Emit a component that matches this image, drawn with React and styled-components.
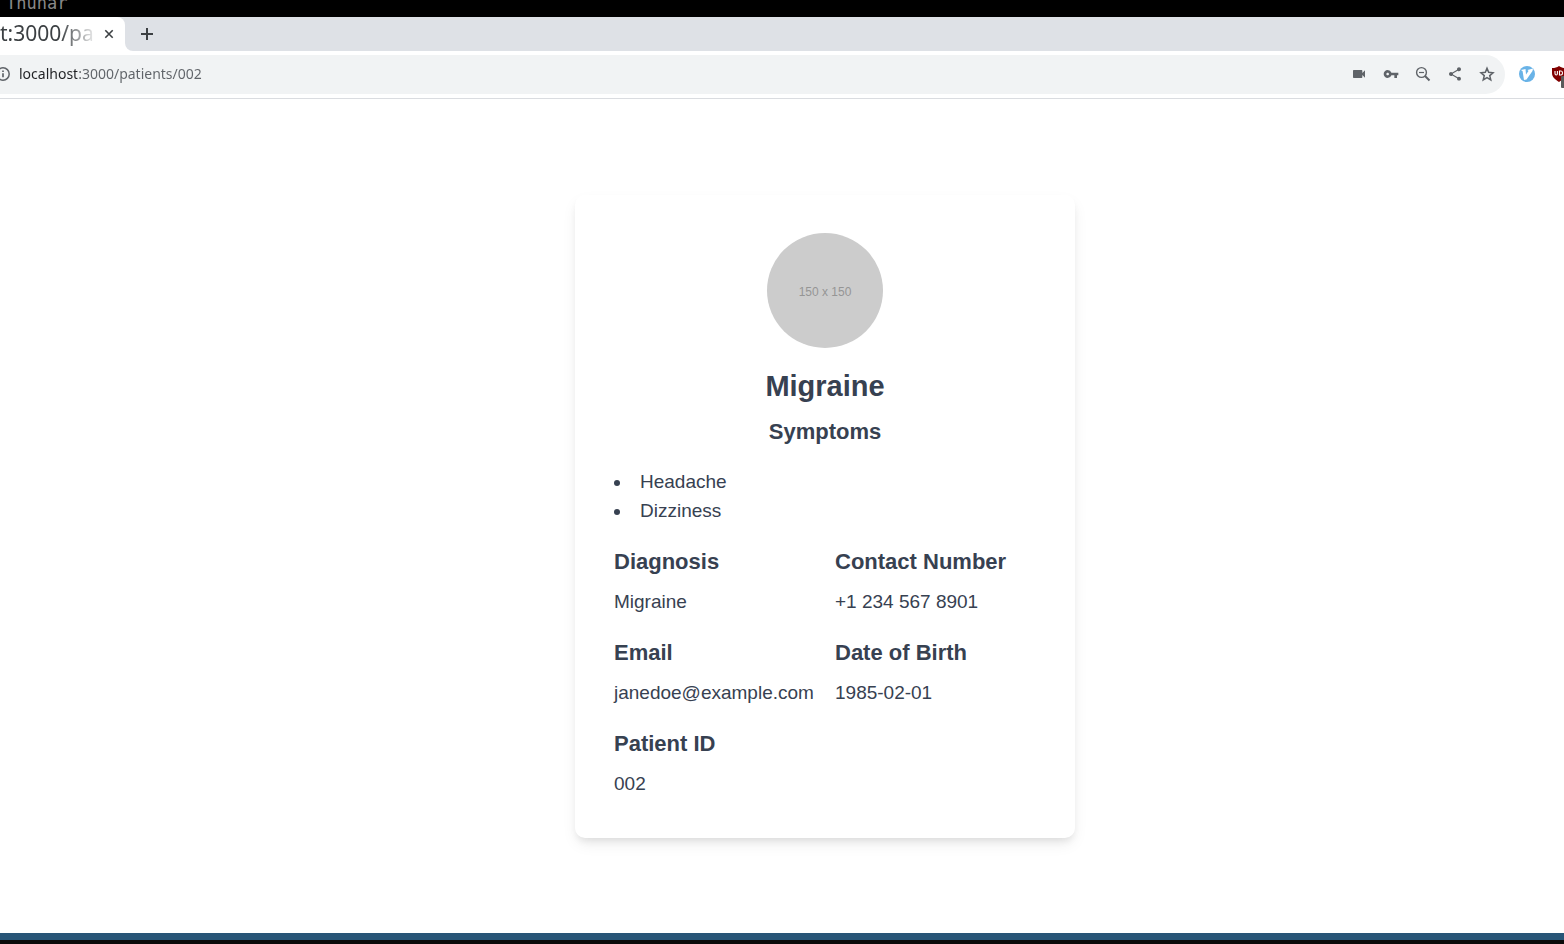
import React from "react";
import styled, { createGlobalStyle } from "styled-components";
import { MdShare, MdVideocam, MdVpnKey } from "react-icons/md";

const GlobalStyle = createGlobalStyle`
  *, *::before, *::after { box-sizing: border-box; }
  body { margin: 0; background: #fff; }
  h1, h2, ul, dl, dt, dd { margin: 0; padding: 0; }
  button, input { font: inherit; border: 0; padding: 0; background: none; }
`;

const Desktop = styled.div`
  display: flex;
  flex-direction: column;
  min-height: 100vh;
  overflow: hidden;
  font-family: "Noto Sans", "Open Sans", sans-serif;
`;

const TitleBar = styled.header`
  display: flex;
  align-items: flex-end;
  height: 17px;
  padding: 0 6px 4px;
  overflow: hidden;
  background: #000;
  color: #888;
  font-family: "DejaVu Sans Mono", monospace;
  font-size: 17px;
  line-height: 20px;
`;

const TabStrip = styled.div`
  display: flex;
  height: 34px;
  background: #dee1e6;
`;

const Tab = styled.div`
  display: flex;
  align-items: center;
  width: 125px;
  background: #fff;
  border-top-right-radius: 8px;
`;

const TabTitle = styled.button`
  width: 95px;
  padding-bottom: 2px;
  overflow: hidden;
  white-space: nowrap;
  text-align: left;
  color: #3c4043;
  font-size: 21px;
  line-height: 28px;
  mask-image: linear-gradient(90deg, #000 60px, transparent 98px);
`;

const IconButton = styled.button`
  display: flex;
  flex: none;
  align-items: center;
  justify-content: center;
  width: ${(p) => p.$width || 32}px;
  height: 32px;
  color: ${(p) => p.$color || "#5f6368"};
`;

const StripRest = styled.div`
  display: flex;
  flex: 1;
  align-items: center;
  padding-left: 6px;
  background: #dee1e6;
  border-bottom-left-radius: 8px;
`;

const StripBase = styled.div`
  display: flex;
  flex: 1;
  background: #fff;
`;

const Toolbar = styled.div`
  display: flex;
  align-items: center;
  height: 48px;
  background: #fff;
  border-bottom: 1px solid #dadce0;
`;

const Omnibox = styled.div`
  display: flex;
  flex: 1;
  align-items: center;
  height: 39px;
  padding: 0 2px 1px 0;
  background: #f1f3f4;
  border-radius: 0 20px 20px 0;
`;

const SiteInfo = styled.button`
  display: flex;
  flex: none;
  justify-content: flex-end;
  width: 11px;
  margin-right: 8px;
  overflow: hidden;
  color: #5f6368;

  svg { flex: none; }
`;

const Address = styled.input`
  flex: 1;
  min-width: 0;
  height: 24px;
  outline: 0;
  font-size: 14px;
  line-height: 24px;
  color: transparent;
  background: linear-gradient(90deg, #202124 58px, #5f6368 58px);
  background-clip: text;
  -webkit-background-clip: text;
`;

const Extensions = styled.div`
  display: flex;
  flex: none;
  width: 59px;
  padding: 0 0 1px 6px;
  overflow: hidden;
`;

const Page = styled.main`
  display: flex;
  flex: 1;
  align-items: center;
  justify-content: center;
  padding: 24px 0 24px 86px;
  background: #fff;
  font-family: "Liberation Sans", Arial, sans-serif;
  color: #374151;
`;

const Card = styled.article`
  display: flex;
  flex-direction: column;
  align-items: center;
  width: 100%;
  max-width: 500px;
  padding: 38px 39px 39px;
  background: #fff;
  border-radius: 10px;
  box-shadow: 0 5px 7px -2px rgba(0, 0, 0, 0.08),
    0 7px 16px -2px rgba(0, 0, 0, 0.08);
`;

const Avatar = styled.div`
  display: flex;
  align-items: center;
  justify-content: center;
  width: 116px;
  height: 115px;
  margin-bottom: 19px;
  padding-top: 4px;
  border-radius: 50%;
  background: #ccc;
  color: #959595;
  font-size: 12px;
`;

const Name = styled.h1`
  margin-bottom: 9px;
  font-size: 29px;
  line-height: 39px;
`;

const Subheading = styled.h2`
  margin-bottom: 18px;
  font-size: 22px;
  line-height: 34px;
`;

const SymptomList = styled.ul`
  align-self: stretch;
  margin-bottom: 20px;
  list-style: disc inside;
  font-size: 19px;
  line-height: 29px;
`;

const Details = styled.dl`
  display: grid;
  grid-template-columns: 1fr 1fr;
  gap: 20px;
  align-self: stretch;
  padding-bottom: 1px;
`;

const Detail = styled.div`
  display: flex;
  flex-direction: column;
  gap: 8px;
  min-width: 0;
`;

const Label = styled.dt`
  font-size: 22px;
  font-weight: 700;
  line-height: 34px;
`;

const Value = styled.dd`
  font-size: 19px;
  line-height: 29px;
`;

const StatusBar = styled.footer`
  height: 11px;
  background: #0a0a0a;
  border-top: 7px solid #285577;
`;

const symptoms = ["Headache", "Dizziness"];

const details = [
  ["Diagnosis", "Migraine"],
  ["Contact Number", "+1 234 567 8901"],
  ["Email", "janedoe@example.com"],
  ["Date of Birth", "1985-02-01"],
  ["Patient ID", "002"],
];

const CloseIcon = () => (
  <svg width="14" height="14" viewBox="0 0 14 14" aria-hidden="true">
    <path d="m3.300 3.300 7.400 7.400M10.700 3.300l-7.400 7.400" stroke="currentColor" strokeWidth="1.600" />
  </svg>
);

const PlusIcon = () => (
  <svg width="16" height="16" viewBox="0 0 16 16" aria-hidden="true">
    <path d="M8 2v12M2 8h12" stroke="currentColor" strokeWidth="2" />
  </svg>
);

const InfoIcon = () => (
  <svg width="17" height="16" viewBox="0 0 17 16" aria-hidden="true">
    <circle cx="9" cy="8" r="6.200" fill="none" stroke="currentColor" strokeWidth="1.500" />
    <path d="M9 7.200v4M9 4.500v1.600" stroke="currentColor" strokeWidth="1.700" />
  </svg>
);

const ZoomOutIcon = () => (
  <svg width="16" height="16" viewBox="0 0 16 16" aria-hidden="true">
    <circle cx="6.500" cy="6.500" r="4.900" fill="none" stroke="currentColor" strokeWidth="1.400" />
    <path d="m10 10 4.500 4.500" stroke="currentColor" strokeWidth="1.900" />
    <path d="M4 6.500h5" stroke="currentColor" strokeWidth="1.200" />
  </svg>
);

const StarIcon = () => (
  <svg width="16" height="16" viewBox="0 0 24 24" aria-hidden="true">
    <path
      d="m12 3.500 2.500 6 6.500.6-4.900 4.300 1.500 6.300L12 17.300l-5.600 3.400 1.500-6.300L3 10.100l6.500-.6Z"
      fill="none"
      stroke="currentColor"
      strokeWidth="2.300"
    />
  </svg>
);

const VimiumIcon = () => (
  <svg width="16" height="16" viewBox="0 0 16 16" aria-hidden="true">
    <circle cx="8" cy="8" r="8" fill="#69b3e7" />
    <path d="M2 4 6.500 3 7 8.500 9.500 5 8.500 4 14 2.500 13.500 5 7.500 13.500 5 14 3.600 5.200Z" fill="#fff" />
  </svg>
);

const ShieldIcon = () => (
  <svg width="16" height="28" viewBox="0 -5 16 28" aria-hidden="true">
    <path d="M8 1C6 2.500 4 3 1 3v5c0 4 3 6.500 7 9 4-2.500 7-5 7-9V3c-3 0-5-.5-7-2Z" fill="#800000" />
    <path d="M4 6v2.500q0 1.500 1.200 1.500t1.200-1.500V6M8.500 6v4h1.500a1.500 2 0 0 0 0-4Z" fill="none" stroke="#fff" strokeWidth="1.100" />
    <rect x="10" y="11" width="8" height="12" rx="1" fill="#5a5a5a" />
  </svg>
);

export default function App() {
  return (
    <Desktop>
      <GlobalStyle />
      <TitleBar>Thunar</TitleBar>
      <TabStrip>
        <Tab>
          <TabTitle type="button">t:3000/pa</TabTitle>
          <IconButton type="button" aria-label="Close tab" $width={28} $color="#3c4043">
            <CloseIcon />
          </IconButton>
        </Tab>
        <StripBase>
          <StripRest>
            <IconButton type="button" aria-label="New tab" $color="#3c4043">
              <PlusIcon />
            </IconButton>
          </StripRest>
        </StripBase>
      </TabStrip>
      <Toolbar>
        <Omnibox>
          <SiteInfo type="button" aria-label="Site information">
            <InfoIcon />
          </SiteInfo>
          <Address aria-label="Address" defaultValue="localhost:3000/patients/002" spellCheck={false} />
          <IconButton type="button" aria-label="Camera"><MdVideocam size={16} /></IconButton>
          <IconButton type="button" aria-label="Passwords"><MdVpnKey size={16} /></IconButton>
          <IconButton type="button" aria-label="Zoom"><ZoomOutIcon /></IconButton>
          <IconButton type="button" aria-label="Share"><MdShare size={16} /></IconButton>
          <IconButton type="button" aria-label="Bookmark"><StarIcon /></IconButton>
        </Omnibox>
        <Extensions>
          <IconButton type="button" aria-label="Vimium"><VimiumIcon /></IconButton>
          <IconButton type="button" aria-label="uBlock"><ShieldIcon /></IconButton>
        </Extensions>
      </Toolbar>
      <Page>
        <Card>
          <Avatar>150 x 150</Avatar>
          <Name>Migraine</Name>
          <Subheading>Symptoms</Subheading>
          <SymptomList>
            {symptoms.map((symptom) => (
              <li key={symptom}>{symptom}</li>
            ))}
          </SymptomList>
          <Details>
            {details.map(([label, value]) => (
              <Detail key={label}>
                <Label>{label}</Label>
                <Value>{value}</Value>
              </Detail>
            ))}
          </Details>
        </Card>
      </Page>
      <StatusBar />
    </Desktop>
  );
}
